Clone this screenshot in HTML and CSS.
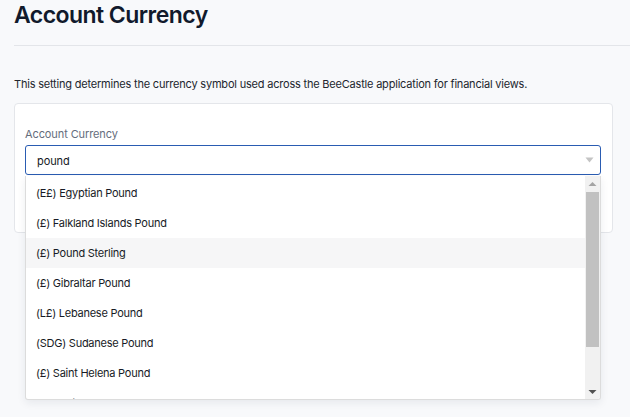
FILE: index.html
```html
<!DOCTYPE html>
<html lang="en">
<head>
<meta charset="utf-8">
<title>Account Currency</title>
<link rel="stylesheet" href="styles.css">
</head>
<body>
<header class="page-head">
  <h1 class="page-title">Account Currency</h1>
</header>
<hr class="rule">
<p class="intro">This setting determines the currency symbol used across the BeeCastle application for financial views.</p>
<section class="card">
  <label class="field-label" for="cur">Account Currency</label>
  <div class="select">
    <div class="select-input">
      <input id="cur" class="select-text" type="text" value="pound">
      <svg class="caret" width="9" height="6" viewBox="0 0 9 6"><path d="M0.5 0.5h8L4.5 5.5z" fill="#c4c4c4"/></svg>
    </div>
    <div class="menu">
      <ul class="options">
        <li class="option">(E£) Egyptian Pound</li>
        <li class="option">(£) Falkland Islands Pound</li>
        <li class="option option-hover">(£) Pound Sterling</li>
        <li class="option">(£) Gibraltar Pound</li>
        <li class="option">(L£) Lebanese Pound</li>
        <li class="option">(SDG) Sudanese Pound</li>
        <li class="option">(£) Saint Helena Pound</li>
        <li class="option">(£) South Sudanese Pound</li>
      </ul>
      <div class="scrollbar">
        <svg class="sb-arrow" width="15" height="15" viewBox="0 0 15 15"><path d="M3.5 10h8L7.5 6z" fill="#a3a3a3"/></svg>
        <div class="sb-track"><div class="sb-thumb"></div></div>
        <svg class="sb-arrow" width="15" height="15" viewBox="0 0 15 15"><path d="M3.5 6h8L7.5 10z" fill="#505050"/></svg>
      </div>
    </div>
  </div>
</section>
</body>
</html>
```
FILE: styles.css
```css
* { box-sizing: border-box; }
html, body { margin: 0; padding: 0; }
body {
  background: #f8f9fb;
  font-family: Inter, "Noto Sans", "Liberation Sans", sans-serif;
  color: #1f2330;
  width: 630px;
  height: 417px;
  overflow: hidden;
}
.page-head { padding: 0 14px; }
.page-title {
  margin: 0;
  font-size: 23px;
  line-height: 31px;
  font-weight: 600;
  color: #111a2c;
  letter-spacing: -0.55px;
}
.rule {
  margin: 14px 0 0 14px;
  border: 0;
  border-top: 1px solid #e3e5e9;
  height: 0;
}
.intro {
  margin: 30px 14px 0 14px;
  font-size: 11px;
  line-height: 16px;
  color: #22262e;
  letter-spacing: -0.2px;
}
.card {
  margin: 11px 17px 0 14px;
  background: #fff;
  border: 1px solid #e4e6ea;
  border-radius: 4px;
  padding: 22px 11px 57px 10px;
}
.field-label {
  display: block;
  font-size: 11px;
  line-height: 16px;
  color: #656d7c;
  margin-bottom: 3px;
  letter-spacing: -0.1px;
}
.select { position: relative; }
.select-input {
  height: 30px;
  border: 1px solid #2a5cb2;
  border-radius: 3px;
  display: flex;
  align-items: center;
  padding: 0 6px 0 11px;
  background: #fff;
}
.select-text {
  flex: 1;
  border: 0;
  outline: none;
  padding: 0;
  margin-top: 1px;
  font: inherit;
  font-size: 11px;
  color: #151925;
  background: transparent;
  letter-spacing: -0.1px;
}
.caret { display: block; }
.menu {
  position: absolute;
  left: 0;
  right: 0;
  top: 31px;
  height: 224px;
  background: #fff;
  border: 1px solid #dcdcdc;
  border-top: 0;
  border-radius: 0 0 3px 3px;
  box-shadow: 0 3px 8px rgba(30, 40, 60, 0.08);
  display: flex;
  overflow: hidden;
}
.options {
  list-style: none;
  margin: 0;
  padding: 2px 0 0 0;
  flex: 1;
  overflow: hidden;
}
.option {
  height: 30px;
  line-height: 30px;
  padding: 0 10px;
  font-size: 11px;
  color: #171b26;
  white-space: nowrap;
  letter-spacing: -0.25px;
}
.option-hover { background: #f6f6f7; }
.scrollbar {
  width: 15px;
  background: #f1f1f1;
  display: flex;
  flex-direction: column;
}
.sb-arrow { display: block; flex: none; }
.sb-track {
  flex: 1;
  padding: 1px 1px 0 1px;
}
.sb-thumb {
  height: 155px;
  background: #c1c1c1;
}
```
